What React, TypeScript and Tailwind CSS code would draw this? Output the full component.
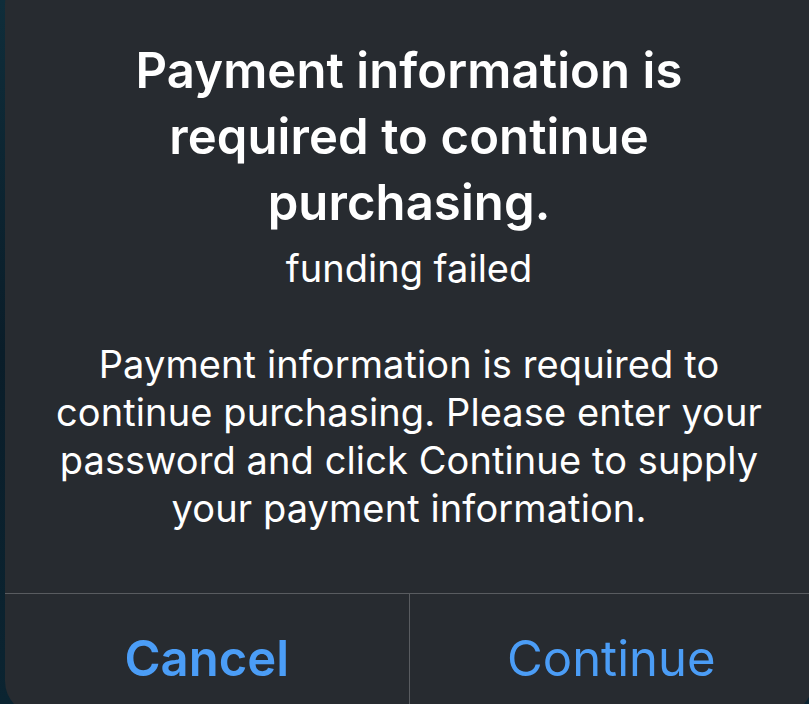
import React from "react";

export default function App() {
  return (
    <div
      className="relative w-[809px] h-[704px] overflow-hidden bg-gradient-to-b from-[#0f2d3a] via-[#0a1d29] to-[#0b2431]"
      style={{ fontFamily: "Inter, 'Noto Sans', sans-serif" }}
    >
      <div className="ml-[5px] -mt-[30px] w-[808px] h-[745px] rounded-[34px] bg-[#272b30] flex flex-col text-white">
        <div className="flex flex-col items-center px-[30px] pt-[68px] text-center">
          <div className="text-[49px] font-semibold leading-[66px] tracking-[0.1px]">
            Payment information is
            <br />
            required to continue
            <br />
            purchasing.
          </div>
          <div className="text-[38px] leading-[44px] mt-[10px]">funding failed</div>
          <div className="text-[38px] leading-[48px] mt-[50px] tracking-[0.1px]">
            Payment information is required to
            <br />
            continue purchasing. Please enter your
            <br />
            password and click Continue to supply
            <br />
            your payment information.
          </div>
        </div>
        <div className="mt-[61px] h-px bg-[#595c60]" />
        <div className="flex h-[130px]">
          <div className="flex-1 flex items-start justify-center pt-[28px] text-[#4b9df6] text-[49px] font-semibold">
            Cancel
          </div>
          <div className="w-px bg-[#595c60]" />
          <div className="flex-1 flex items-start justify-center pt-[28px] text-[#4b9df6] text-[49px]">
            Continue
          </div>
        </div>
      </div>
    </div>
  );
}
